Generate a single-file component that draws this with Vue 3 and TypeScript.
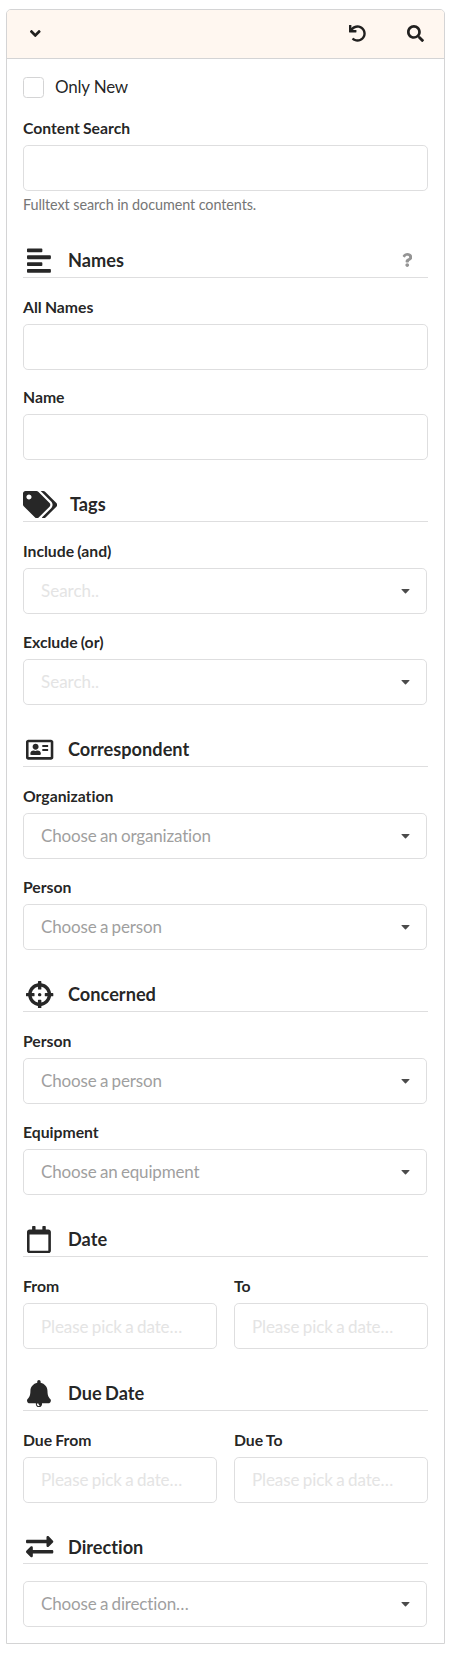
<script setup lang="ts">
import { ref } from 'vue'

interface Icon {
  width: number
  height: number
  d: string
}

interface Field {
  label?: string
  kind: 'text' | 'search' | 'select' | 'date'
  placeholder?: string
}

interface Section {
  title: string
  icon: Icon
  help?: boolean
  columns?: boolean
  fields: Field[]
}

const angleDown =
  'M143 352.3L7 216.3c-9.4-9.4-9.4-24.6 0-33.9l22.6-22.6c9.4-9.4 24.6-9.4 33.9 0l96.4 96.4 96.4-96.4c9.4-9.4 24.6-9.4 33.9 0l22.6 22.6c9.4 9.4 9.4 24.6 0 33.9l-136 136c-9.2 9.4-24.4 9.4-33.8 0z'
const undo =
  'M212.333 224.333H12c-6.627 0-12-5.373-12-12V12C0 5.373 5.373 0 12 0h48c6.627 0 12 5.373 12 12v78.112C117.773 39.279 184.26 7.47 258.175 8.007c136.906.994 246.448 111.623 246.157 248.532C504.041 393.258 393.12 504 256.333 504c-64.089 0-122.496-24.313-166.51-64.215-5.099-4.622-5.334-12.554-.467-17.42l33.967-33.967c4.474-4.474 11.662-4.717 16.401-.525C170.76 415.336 211.58 432 256.333 432c97.268 0 176-78.716 176-176 0-97.267-78.716-176-176-176-58.496 0-110.28 28.476-142.274 72.333h98.274c6.627 0 12 5.373 12 12v48c0 6.627-5.373 12-12 12z'
const search =
  'M505 442.7L405.3 343c-4.5-4.5-10.6-7-17-7H372c27.6-35.3 44-79.7 44-128C416 93.1 322.9 0 208 0S0 93.1 0 208s93.1 208 208 208c48.3 0 92.7-16.4 128-44v16.3c0 6.4 2.5 12.5 7 17l99.7 99.7c9.4 9.4 24.6 9.4 33.9 0l28.3-28.3c9.4-9.4 9.4-24.6.1-34zM208 336c-70.7 0-128-57.2-128-128 0-70.7 57.2-128 128-128 70.7 0 128 57.2 128 128 0 70.7-57.2 128-128 128z'
const question =
  'M202.021 0C122.202 0 70.503 32.703 29.914 91.026c-7.363 10.58-5.093 25.086 5.178 32.874l43.138 32.709c10.373 7.865 25.132 6.026 33.253-4.148 25.049-31.381 43.63-49.449 82.757-49.449 30.764 0 68.816 19.799 68.816 49.631 0 22.552-18.617 34.134-48.993 51.164-35.423 19.86-82.299 44.576-82.299 106.405V320c0 13.255 10.745 24 24 24h72.471c13.255 0 24-10.745 24-24v-5.773c0-42.86 125.268-44.645 125.268-160.627C377.504 66.256 286.902 0 202.021 0zM192 373.459c-38.196 0-69.271 31.075-69.271 69.271 0 38.195 31.075 69.27 69.271 69.27s69.271-31.075 69.271-69.27-31.075-69.271-69.271-69.271z'

const alignLeft: Icon = {
  width: 448,
  height: 512,
  d: 'M288 44v40c0 8.837-7.163 16-16 16H16c-8.837 0-16-7.163-16-16V44c0-8.837 7.163-16 16-16h256c8.837 0 16 7.163 16 16zM0 172v40c0 8.837 7.163 16 16 16h416c8.837 0 16-7.163 16-16v-40c0-8.837-7.163-16-16-16H16c-8.837 0-16 7.163-16 16zm16 312h416c8.837 0 16-7.163 16-16v-40c0-8.837-7.163-16-16-16H16c-8.837 0-16 7.163-16 16v40c0 8.837 7.163 16 16 16zm256-200H16c-8.837 0-16 7.163-16 16v40c0 8.837 7.163 16 16 16h256c8.837 0 16-7.163 16-16v-40c0-8.837-7.163-16-16-16z',
}
const tags: Icon = {
  width: 640,
  height: 512,
  d: 'M497.941 225.941L286.059 14.059A48 48 0 0 0 252.118 0H48C21.49 0 0 21.49 0 48v204.118a48 48 0 0 0 14.059 33.941l211.882 211.882c18.744 18.745 49.136 18.746 67.882 0l204.118-204.118c18.745-18.745 18.745-49.137 0-67.882zM112 160c-26.51 0-48-21.49-48-48s21.49-48 48-48 48 21.49 48 48-21.49 48-48 48zm513.941 133.823L421.823 497.941c-18.745 18.745-49.137 18.745-67.882 0l-.36-.36L527.64 323.522c16.999-16.999 26.36-39.6 26.36-63.64s-9.362-46.641-26.36-63.64L331.397 0h48.721a48 48 0 0 1 33.941 14.059l211.882 211.882c18.745 18.745 18.745 49.137 0 67.882z',
}
const addressCard: Icon = {
  width: 512,
  height: 512,
  d: 'M468 68H44C20 68 0 86 0 110v292c0 24 20 42 44 42h424c24 0 44-18 44-42V110c0-24-20-42-44-42zM464 396H48V116h416v280zM180 256c31 0 56-25 56-56s-25-56-56-56-56 25-56 56 25 56 56 56zM102 356h156c11 0 20-8 20-17v-12c0-31-27-53-60-53-10 0-16 8-38 8s-28-8-38-8c-33 0-60 22-60 53v12c0 9 9 17 20 17zM312 282h96c4 0 8-4 8-8v-20c0-4-4-8-8-8h-96c-4 0-8 4-8 8v20c0 4 4 8 8 8zM312 206h96c4 0 8-4 8-8v-20c0-4-4-8-8-8h-96c-4 0-8 4-8 8v20c0 4 4 8 8 8z',
}
const crosshairs: Icon = {
  width: 512,
  height: 512,
  d: 'M500 224h-30.364C455.724 130.325 381.675 56.276 288 42.364V12c0-6.627-5.373-12-12-12h-40c-6.627 0-12 5.373-12 12v30.364C130.325 56.276 56.276 130.325 42.364 224H12c-6.627 0-12 5.373-12 12v40c0 6.627 5.373 12 12 12h30.364C56.276 381.675 130.325 455.724 224 469.636V500c0 6.627 5.373 12 12 12h40c6.627 0 12-5.373 12-12v-30.364C381.675 455.724 455.724 381.675 469.636 288H500c6.627 0 12-5.373 12-12v-40c0-6.627-5.373-12-12-12zM288 404.634V364c0-6.627-5.373-12-12-12h-40c-6.627 0-12 5.373-12 12v40.634C165.826 392.232 119.783 346.243 107.366 288H148c6.627 0 12-5.373 12-12v-40c0-6.627-5.373-12-12-12h-40.634C119.768 165.826 165.757 119.783 224 107.366V148c0 6.627 5.373 12 12 12h40c6.627 0 12-5.373 12-12v-40.634C346.174 119.768 392.217 165.757 404.634 224H364c-6.627 0-12 5.373-12 12v40c0 6.627 5.373 12 12 12h40.634C392.232 346.174 346.243 392.217 288 404.634zM288 256c0 17.673-14.327 32-32 32s-32-14.327-32-32c0-17.673 14.327-32 32-32s32 14.327 32 32z',
}
const calendar: Icon = {
  width: 448,
  height: 512,
  d: 'M400 64h-48V12c0-6.6-5.4-12-12-12h-40c-6.6 0-12 5.4-12 12v52H160V12c0-6.6-5.4-12-12-12h-40c-6.6 0-12 5.4-12 12v52H48C21.5 64 0 85.5 0 112v352c0 26.5 21.5 48 48 48h352c26.5 0 48-21.5 48-48V112c0-26.5-21.5-48-48-48zm-6 400H54c-3.3 0-6-2.7-6-6V160h352v298c0 3.3-2.7 6-6 6z',
}
const bell: Icon = {
  width: 448,
  height: 512,
  d: 'M439.39 362.29c-19.32-20.76-55.47-51.99-55.47-154.29 0-77.7-54.48-139.9-127.94-155.16V32c0-17.67-14.32-32-31.98-32s-31.98 14.33-31.98 32v20.84C118.56 68.1 64.08 130.3 64.08 208c0 102.3-36.15 133.53-55.47 154.29-6 6.45-8.66 14.16-8.61 21.71.11 16.4 12.98 50 32.1 50H166v14c0 35.35 26 64 58 64s58-28.65 58-64v-14h133.9c19.12 0 32-33.6 32.1-50 .05-7.55-2.61-15.27-8.61-21.71zM224 488c-22.06 0-40-17.94-40-40 0-4.42 3.58-8 8-8h18c5 0 8 3.58 8 8 0 13.23 4 20 14 24 4.42 0 8 3.58 8 8s-11.58 8-16 8z',
}
const exchange: Icon = {
  width: 512,
  height: 512,
  d: 'M0 168v-16c0-13.255 10.745-24 24-24h360V80c0-21.367 25.899-32.042 40.971-16.971l80 80c9.372 9.373 9.372 24.569 0 33.941l-80 80C409.956 271.982 384 261.456 384 240v-48H24c-13.255 0-24-10.745-24-24zm488 152H128v-48c0-21.314-25.862-32.08-40.971-16.971l-80 80c-9.372 9.373-9.372 24.569 0 33.941l80 80C102.057 463.997 128 453.437 128 432v-48h360c13.255 0 24-10.745 24-24v-16c0-13.255-10.745-24-24-24z',
}

const datePlaceholder = 'Please pick a date…'

const sections: Section[] = [
  {
    title: 'Names',
    icon: alignLeft,
    help: true,
    fields: [
      { label: 'All Names', kind: 'text' },
      { label: 'Name', kind: 'text' },
    ],
  },
  {
    title: 'Tags',
    icon: tags,
    fields: [
      { label: 'Include (and)', kind: 'search', placeholder: 'Search..' },
      { label: 'Exclude (or)', kind: 'search', placeholder: 'Search..' },
    ],
  },
  {
    title: 'Correspondent',
    icon: addressCard,
    fields: [
      { label: 'Organization', kind: 'select', placeholder: 'Choose an organization' },
      { label: 'Person', kind: 'select', placeholder: 'Choose a person' },
    ],
  },
  {
    title: 'Concerned',
    icon: crosshairs,
    fields: [
      { label: 'Person', kind: 'select', placeholder: 'Choose a person' },
      { label: 'Equipment', kind: 'select', placeholder: 'Choose an equipment' },
    ],
  },
  {
    title: 'Date',
    icon: calendar,
    columns: true,
    fields: [
      { label: 'From', kind: 'date', placeholder: datePlaceholder },
      { label: 'To', kind: 'date', placeholder: datePlaceholder },
    ],
  },
  {
    title: 'Due Date',
    icon: bell,
    columns: true,
    fields: [
      { label: 'Due From', kind: 'date', placeholder: datePlaceholder },
      { label: 'Due To', kind: 'date', placeholder: datePlaceholder },
    ],
  },
  {
    title: 'Direction',
    icon: exchange,
    fields: [{ kind: 'select', placeholder: 'Choose a direction…' }],
  },
]

const onlyNew = ref(false)

const isDropdown = (field: Field) => field.kind === 'search' || field.kind === 'select'
</script>

<template>
  <div class="panel">
    <header class="toolbar">
      <svg class="angle" viewBox="0 0 320 512"><path :d="angleDown" /></svg>
      <svg class="tool undo" viewBox="0 0 512 512"><path :d="undo" /></svg>
      <svg class="tool" viewBox="0 0 512 512"><path :d="search" /></svg>
    </header>

    <div class="form">
      <label class="check">
        <input v-model="onlyNew" type="checkbox" />
        <span>Only New</span>
      </label>

      <div class="field">
        <label class="label">Content Search</label>
        <input class="input" type="text" />
        <span class="hint">Fulltext search in document contents.</span>
      </div>

      <section v-for="section in sections" :key="section.title" class="section">
        <h3 class="heading">
          <span class="heading-icon" :class="{ square: section.icon.width === 512 }">
            <svg
              :viewBox="`0 0 ${section.icon.width} ${section.icon.height}`"
              :width="(section.icon.width / 512) * 27.32"
              height="27.32"
            >
              <path :d="section.icon.d" />
            </svg>
          </span>
          <span class="heading-text">{{ section.title }}</span>
          <svg v-if="section.help" class="help" viewBox="0 0 384 512"><path :d="question" /></svg>
        </h3>
        <div class="fields" :class="{ columns: section.columns }">
          <div v-for="(field, i) in section.fields" :key="i" class="field">
            <label v-if="field.label" class="label">{{ field.label }}</label>
            <div v-if="isDropdown(field)" class="dropdown" :class="field.kind">
              <span>{{ field.placeholder }}</span>
              <svg class="caret" viewBox="0 0 10 6"><path d="M.6 0h8.8q.8.2.2 1L5.6 5.2q-.6.5-1.2 0L.4 1Q-.2.2.6 0z" /></svg>
            </div>
            <input v-else class="input" type="text" :placeholder="field.placeholder" />
          </div>
        </div>
      </section>
    </div>
  </div>
</template>

<style>
body {
  background: #fff;
}
</style>

<style scoped>
.panel {
  box-sizing: border-box;
  width: 439px;
  height: 1635px;
  margin: 9px 0 0 6px;
  border: 1px solid #d4d4d5;
  border-radius: 5px 5px 0 0;
  font-family: Lato, 'Liberation Sans', sans-serif;
  font-size: 17px;
  line-height: 24.29px;
  font-variant-ligatures: none;
  color: rgba(0, 0, 0, 0.87);
}

svg {
  display: block;
  fill: currentColor;
}

.toolbar {
  box-sizing: border-box;
  display: flex;
  align-items: center;
  height: 49px;
  padding: 0 20px 1px 23px;
  background: #fff7f0;
  border-bottom: 1px solid #d4d4d5;
  border-radius: 4px 4px 0 0;
}

.angle {
  width: 10.6px;
  height: 17px;
}

.tool {
  width: 17px;
  height: 17px;
}

.undo {
  margin-left: auto;
  margin-right: 41px;
}

.form {
  padding: 17px 16px 16px;
}

.check {
  display: flex;
  align-items: center;
  height: 23px;
  margin-bottom: 16.8px;
  letter-spacing: -0.2px;
}

.check input {
  appearance: none;
  box-sizing: border-box;
  width: 21px;
  height: 21px;
  margin: 0 11px 0 0;
  border: 1px solid #d4d4d5;
  border-radius: 3.5px;
  background: #fff;
}

.label {
  display: block;
  margin-bottom: 4.86px;
  font-size: 15.79px;
  font-weight: 700;
  letter-spacing: -0.03px;
  word-spacing: -0.6px;
}

.input,
.dropdown {
  box-sizing: border-box;
  display: block;
  width: 100%;
  height: 45.71px;
  margin: 0;
  padding: 0 17px;
  border: 1px solid #dededf;
  border-radius: 4.86px;
  background: #fff;
  font: inherit;
  color: inherit;
  outline: none;
}

.input {
  letter-spacing: -0.1px;
  word-spacing: -0.8px;
}

.input::placeholder {
  color: #e4e4e4;
  opacity: 1;
}

.dropdown {
  display: flex;
  align-items: center;
  justify-content: space-between;
  width: calc(100% - 1px);
  height: 46.14px;
  padding-right: 16px;
}

.select span {
  color: #9f9f9f;
  letter-spacing: -0.16px;
  word-spacing: -0.8px;
}

.search span {
  color: #e4e4e4;
}

.caret {
  width: 9px;
  height: 5px;
  margin-top: 1px;
  color: #4b4b4b;
}

.hint {
  display: block;
  margin: 2px 0 -1px;
  font-size: 14.4px;
  letter-spacing: -0.085px;
  color: #767676;
}

.heading {
  box-sizing: border-box;
  display: flex;
  align-items: center;
  height: 34px;
  margin: 27.72px 0 17px;
  border-bottom: 1px solid #dededf;
  font-size: 18.21px;
  font-weight: 700;
  word-spacing: -1px;
}

.heading-icon {
  display: flex;
  justify-content: center;
  min-width: 32.24px;
  margin-right: 12.75px;
  color: #272727;
}

.square {
  box-sizing: border-box;
  padding-left: 2px;
}

.help {
  width: 10.5px;
  height: 14px;
  margin-left: auto;
  margin-right: 16px;
  color: #949494;
}

.fields {
  display: grid;
  gap: 15.79px;
}

.columns {
  grid-template-columns: 1fr 1fr;
  gap: 17px;
}

.field {
  min-width: 0;
}
</style>
